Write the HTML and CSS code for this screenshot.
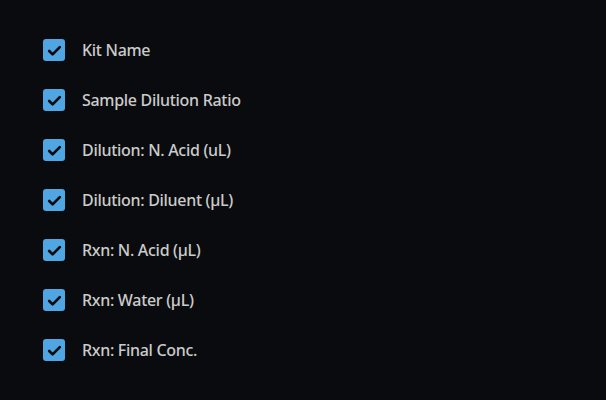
FILE: index.html
```html
<!DOCTYPE html>
<html lang="en">

<head>
    <meta charset="UTF-8">
    <meta name="viewport" content="width=device-width, initial-scale=1.0">
    <title>Export Columns</title>
    <link rel="stylesheet" href="styles.css">
</head>

<body>

    <div class="column-list">
        <label class="column-option">
            <span class="check"><svg viewBox="0 0 20 20"><path d="M5 10.5l3.2 3.2L15 6.8" /></svg></span>
            <span class="option-label">Kit Name</span>
        </label>
        <label class="column-option">
            <span class="check"><svg viewBox="0 0 20 20"><path d="M5 10.5l3.2 3.2L15 6.8" /></svg></span>
            <span class="option-label">Sample Dilution Ratio</span>
        </label>
        <label class="column-option">
            <span class="check"><svg viewBox="0 0 20 20"><path d="M5 10.5l3.2 3.2L15 6.8" /></svg></span>
            <span class="option-label">Dilution: N. Acid (uL)</span>
        </label>
        <label class="column-option">
            <span class="check"><svg viewBox="0 0 20 20"><path d="M5 10.5l3.2 3.2L15 6.8" /></svg></span>
            <span class="option-label">Dilution: Diluent (µL)</span>
        </label>
        <label class="column-option">
            <span class="check"><svg viewBox="0 0 20 20"><path d="M5 10.5l3.2 3.2L15 6.8" /></svg></span>
            <span class="option-label">Rxn: N. Acid (µL)</span>
        </label>
        <label class="column-option">
            <span class="check"><svg viewBox="0 0 20 20"><path d="M5 10.5l3.2 3.2L15 6.8" /></svg></span>
            <span class="option-label">Rxn: Water (µL)</span>
        </label>
        <label class="column-option">
            <span class="check"><svg viewBox="0 0 20 20"><path d="M5 10.5l3.2 3.2L15 6.8" /></svg></span>
            <span class="option-label">Rxn: Final Conc.</span>
        </label>
    </div>

</body>

</html>
```

FILE: styles.css
```css
* {
    box-sizing: border-box;
    margin: 0;
    padding: 0;
}

body {
    background-color: #0a0b0e;
    color: #cbcbcb;
    font-family: "Noto Sans", sans-serif;
    min-height: 100vh;
}

.column-list {
    display: flex;
    flex-direction: column;
    gap: 28px;
    padding: 39px 0 0 43px;
}

.column-option {
    display: flex;
    align-items: center;
    gap: 17px;
    height: 22px;
}

.check {
    width: 22px;
    height: 22px;
    border-radius: 3px;
    background-color: #4fa6e2;
    display: flex;
    align-items: center;
    justify-content: center;
}

.check svg {
    width: 21px;
    height: 21px;
    fill: none;
    stroke: #0a0b0e;
    stroke-width: 2.6;
    stroke-linecap: round;
    stroke-linejoin: round;
}

.option-label {
    font-size: 16px;
    font-weight: 500;
    letter-spacing: -0.3px;
}
```
